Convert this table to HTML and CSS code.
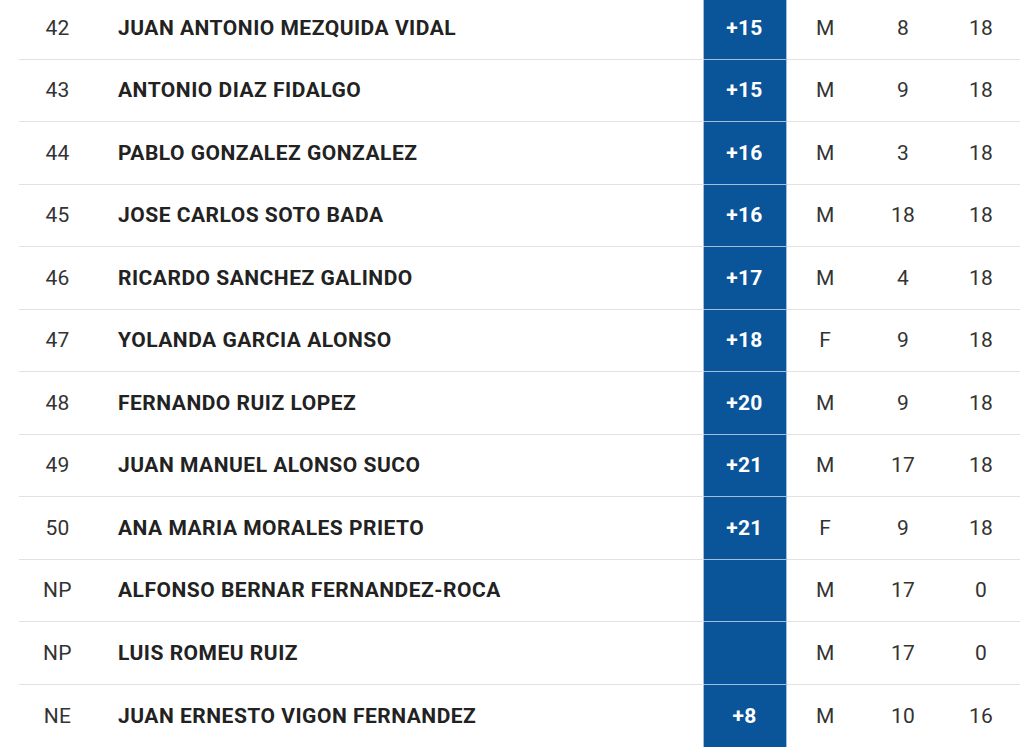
FILE: index.html
```html
<!DOCTYPE html>
<html lang="es">
<head>
<meta charset="utf-8">
<link rel="stylesheet" href="styles.css">
</head>
<body>
<div class="wrap">
<table class="results">
<tbody>
<tr><td class="pos">42</td><td class="name">JUAN ANTONIO MEZQUIDA VIDAL</td><td class="score">+15</td><td class="num">M</td><td class="num">8</td><td class="num">18</td></tr>
<tr><td class="pos">43</td><td class="name">ANTONIO DIAZ FIDALGO</td><td class="score">+15</td><td class="num">M</td><td class="num">9</td><td class="num">18</td></tr>
<tr><td class="pos">44</td><td class="name">PABLO GONZALEZ GONZALEZ</td><td class="score">+16</td><td class="num">M</td><td class="num">3</td><td class="num">18</td></tr>
<tr><td class="pos">45</td><td class="name">JOSE CARLOS SOTO BADA</td><td class="score">+16</td><td class="num">M</td><td class="num">18</td><td class="num">18</td></tr>
<tr><td class="pos">46</td><td class="name">RICARDO SANCHEZ GALINDO</td><td class="score">+17</td><td class="num">M</td><td class="num">4</td><td class="num">18</td></tr>
<tr><td class="pos">47</td><td class="name">YOLANDA GARCIA ALONSO</td><td class="score">+18</td><td class="num">F</td><td class="num">9</td><td class="num">18</td></tr>
<tr><td class="pos">48</td><td class="name">FERNANDO RUIZ LOPEZ</td><td class="score">+20</td><td class="num">M</td><td class="num">9</td><td class="num">18</td></tr>
<tr><td class="pos">49</td><td class="name">JUAN MANUEL ALONSO SUCO</td><td class="score">+21</td><td class="num">M</td><td class="num">17</td><td class="num">18</td></tr>
<tr><td class="pos">50</td><td class="name">ANA MARIA MORALES PRIETO</td><td class="score">+21</td><td class="num">F</td><td class="num">9</td><td class="num">18</td></tr>
<tr><td class="pos">NP</td><td class="name">ALFONSO BERNAR FERNANDEZ-ROCA</td><td class="score"></td><td class="num">M</td><td class="num">17</td><td class="num">0</td></tr>
<tr><td class="pos">NP</td><td class="name">LUIS ROMEU RUIZ</td><td class="score"></td><td class="num">M</td><td class="num">17</td><td class="num">0</td></tr>
<tr class="last"><td class="pos">NE</td><td class="name">JUAN ERNESTO VIGON FERNANDEZ</td><td class="score">+8</td><td class="num">M</td><td class="num">10</td><td class="num">16</td></tr>
</tbody>
</table>
</div>
</body>
</html>
```
FILE: styles.css
```css
html, body {
  margin: 0;
  padding: 0;
  background: #ffffff;
  overflow: hidden;
}
.wrap {
  margin-top: -4px;
  padding-left: 19px;
}
.results {
  width: 1001px;
  border-collapse: collapse;
  table-layout: fixed;
  font-family: Roboto, "Liberation Sans", sans-serif;
  font-size: 21px;
  letter-spacing: 0.3px;
  color: #2a2a2a;
}
.results td {
  height: 62.5px;
  padding: 0;
  border-bottom: 1px solid #e2e2e2;
  vertical-align: middle;
  box-sizing: border-box;
}
.results tr.last td {
  border-bottom: none;
}
.pos {
  width: 77px;
  text-align: center;
  color: #333;
}
.name {
  width: 607px;
  padding-left: 22px !important;
  font-weight: 700;
  letter-spacing: 0.5px;
  color: #222;
}
.results td.score {
  width: 83px;
  background: #0a5499;
  color: #ffffff;
  font-weight: 700;
  text-align: center;
  border: 1px solid #a3bedb;
}
.num {
  width: 78px;
  text-align: center;
  color: #333;
}
```
